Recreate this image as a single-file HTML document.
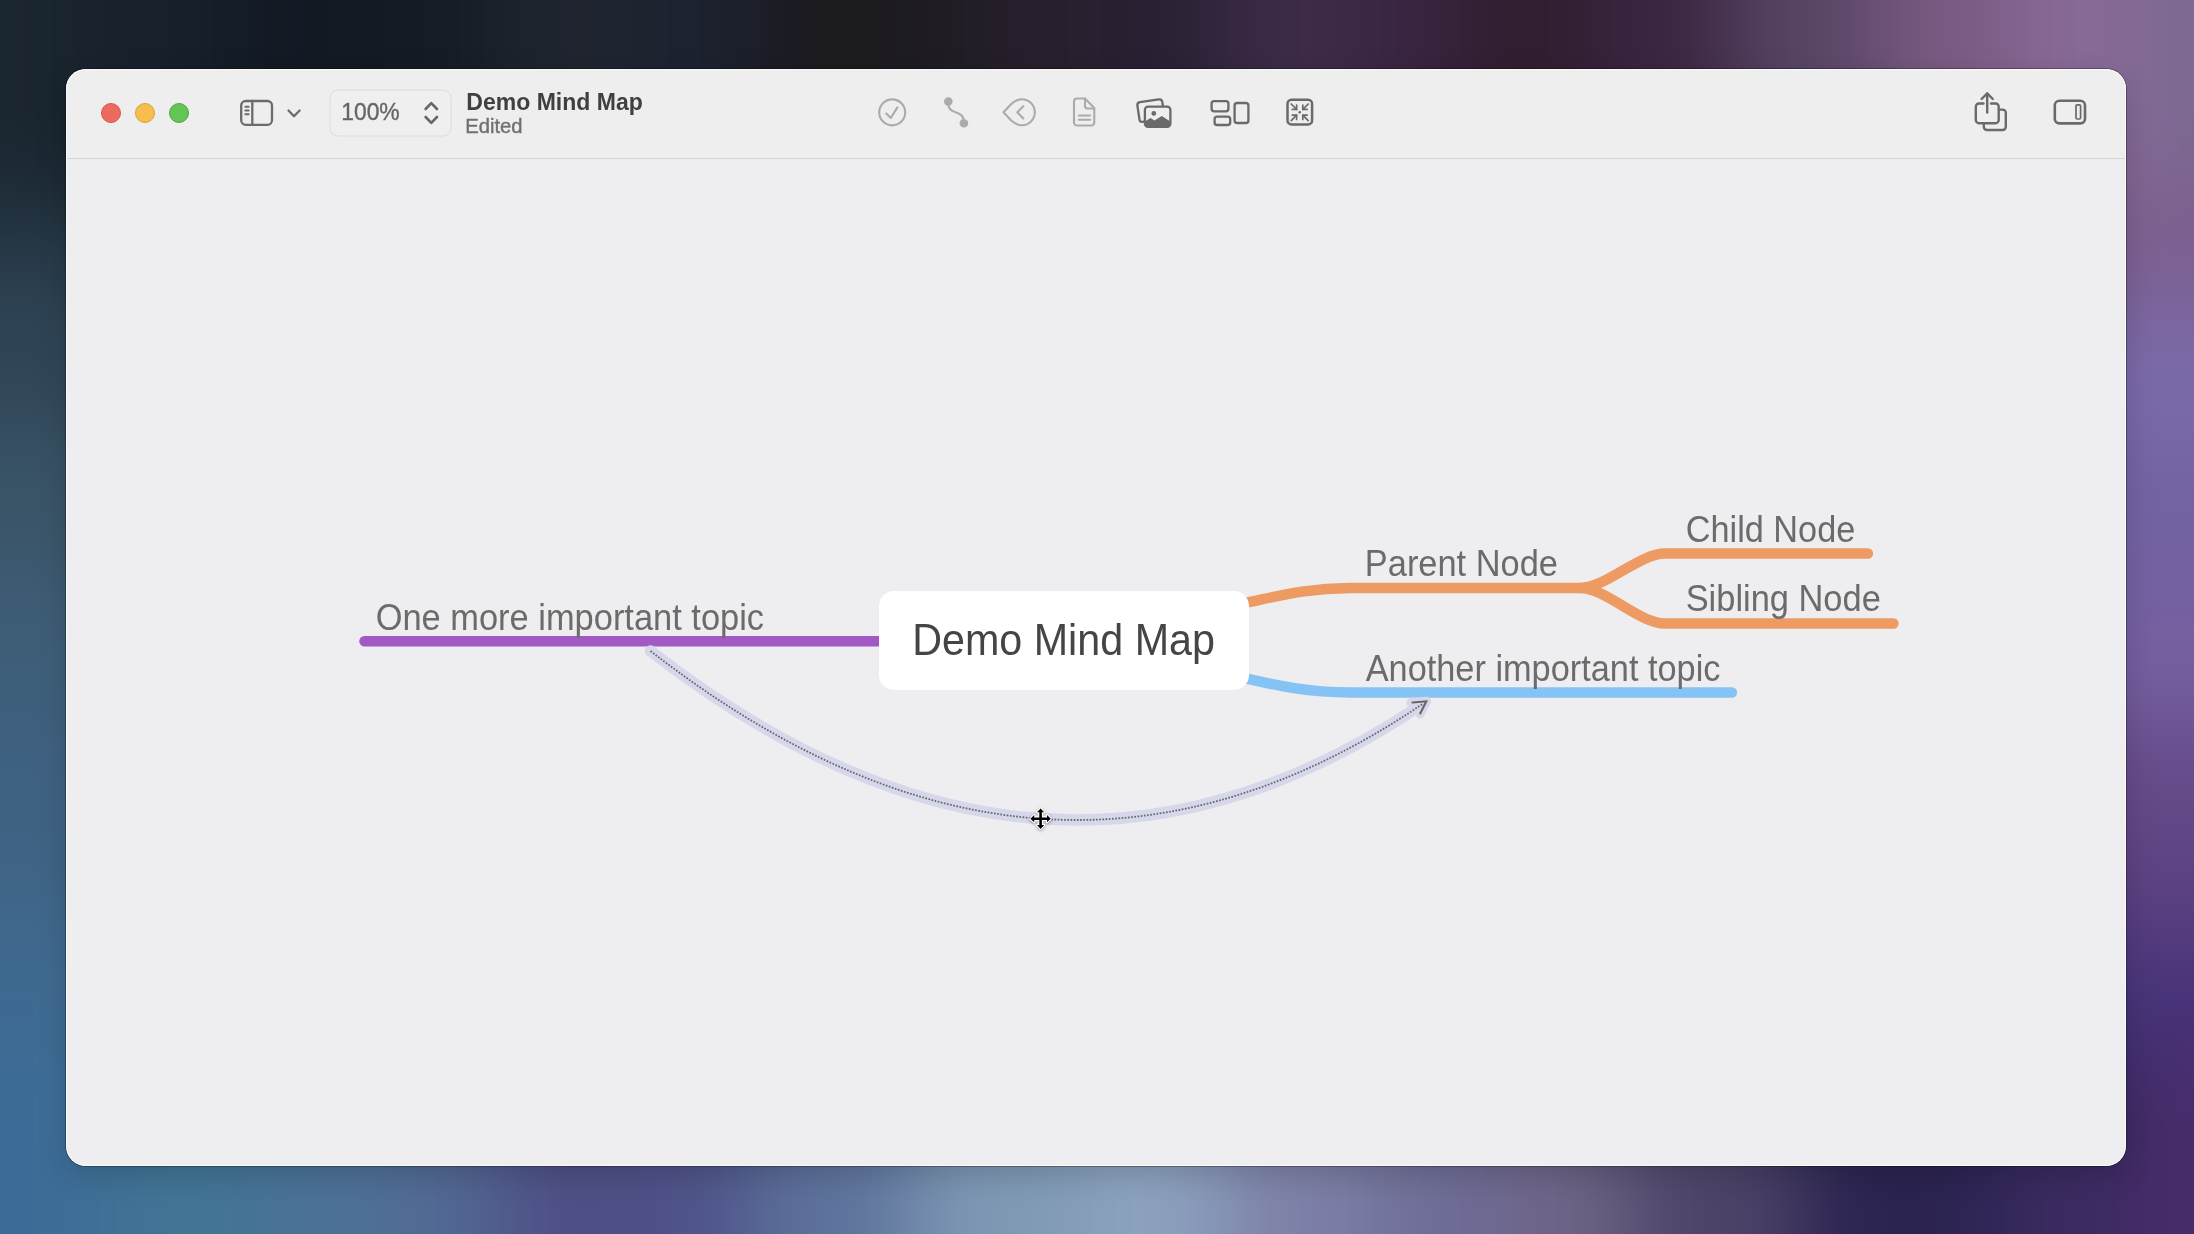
<!DOCTYPE html>
<html><head><meta charset="utf-8">
<style>
html,body{margin:0;padding:0;width:2194px;height:1234px;overflow:hidden;}
body{position:relative;font-family:"Liberation Sans",sans-serif;background:#2c3548;}
.bg{position:absolute;}
#wall div div{position:absolute;}
#win{position:absolute;left:66px;top:69px;width:2060px;height:1097px;border-radius:20px;overflow:hidden;background:#eeeef0;box-shadow:0 0 0 1px rgba(0,0,0,0.3),0 10px 30px rgba(0,0,0,0.16);}
#tb{position:absolute;left:0;top:0;width:2060px;height:89px;background:#eeeeee;border-bottom:1px solid #d5d5d7;}
.dot{position:absolute;width:20px;height:20px;border-radius:50%;box-sizing:border-box;}
.txt{position:absolute;white-space:nowrap;line-height:1;}
svg{position:absolute;left:0;top:0;overflow:visible;}
</style></head>
<body>
<div id="wall" style="position:absolute;left:0;top:0;width:2194px;height:1234px;overflow:hidden;"><div style="position:absolute;left:-400px;top:-400px;width:3000px;height:2034px;filter:blur(45px);"><div style="left:0;top:0;width:3000px;height:2034px;background:#35405a"></div><div style="left:0px;top:0px;width:640px;height:450px;background:#1b2630"></div><div style="left:0px;top:450px;width:640px;height:100px;background:#1c2834"></div><div style="left:0px;top:550px;width:640px;height:125px;background:#243442"></div><div style="left:0px;top:675px;width:640px;height:150px;background:#2f4556"></div><div style="left:0px;top:825px;width:640px;height:150px;background:#3a5468"></div><div style="left:0px;top:975px;width:640px;height:150px;background:#3e5e78"></div><div style="left:0px;top:1125px;width:640px;height:175px;background:#3f6283"></div><div style="left:0px;top:1300px;width:640px;height:217px;background:#3f6a90"></div><div style="left:0px;top:1517px;width:640px;height:1483px;background:#3b6c97"></div><div style="left:2350px;top:0px;width:650px;height:450px;background:#7b6991"></div><div style="left:2350px;top:450px;width:650px;height:100px;background:#7a5a8a"></div><div style="left:2350px;top:550px;width:650px;height:150px;background:#7c5e8e"></div><div style="left:2350px;top:700px;width:650px;height:150px;background:#7a6aa8"></div><div style="left:2350px;top:850px;width:650px;height:125px;background:#7262a2"></div><div style="left:2350px;top:975px;width:650px;height:150px;background:#7560a0"></div><div style="left:2350px;top:1125px;width:650px;height:125px;background:#654a88"></div><div style="left:2350px;top:1250px;width:650px;height:100px;background:#5a4080"></div><div style="left:2350px;top:1350px;width:650px;height:135px;background:#46337a"></div><div style="left:2350px;top:1485px;width:650px;height:117px;background:#3a2a68"></div><div style="left:2350px;top:1602px;width:650px;height:1398px;background:#4a2c6c"></div><div style="left:0px;top:0px;width:475px;height:590px;background:#1a2630"></div><div style="left:475px;top:0px;width:150px;height:590px;background:#17212c"></div><div style="left:625px;top:0px;width:135px;height:590px;background:#121923"></div><div style="left:760px;top:0px;width:130px;height:590px;background:#151b25"></div><div style="left:890px;top:0px;width:140px;height:590px;background:#1f252f"></div><div style="left:1030px;top:0px;width:130px;height:590px;background:#1d2231"></div><div style="left:1160px;top:0px;width:110px;height:590px;background:#1a1a1e"></div><div style="left:1270px;top:0px;width:115px;height:590px;background:#1e1c22"></div><div style="left:1385px;top:0px;width:115px;height:590px;background:#291f2d"></div><div style="left:1500px;top:0px;width:125px;height:590px;background:#282133"></div><div style="left:1625px;top:0px;width:125px;height:590px;background:#3e2c49"></div><div style="left:1750px;top:0px;width:110px;height:590px;background:#392542"></div><div style="left:1860px;top:0px;width:130px;height:590px;background:#301d2e"></div><div style="left:1990px;top:0px;width:140px;height:590px;background:#3a2540"></div><div style="left:2130px;top:0px;width:145px;height:590px;background:#574565"></div><div style="left:2275px;top:0px;width:140px;height:590px;background:#7a5a82"></div><div style="left:2415px;top:0px;width:122px;height:590px;background:#8a6b98"></div><div style="left:2537px;top:0px;width:463px;height:590px;background:#7b6991"></div><div style="left:0px;top:1450px;width:500px;height:584px;background:#3b6c97"></div><div style="left:500px;top:1450px;width:175px;height:584px;background:#427496"></div><div style="left:675px;top:1450px;width:125px;height:584px;background:#4d7196"></div><div style="left:800px;top:1450px;width:105px;height:584px;background:#526894"></div><div style="left:905px;top:1450px;width:115px;height:584px;background:#4e4e84"></div><div style="left:1020px;top:1450px;width:130px;height:584px;background:#4e5288"></div><div style="left:1150px;top:1450px;width:160px;height:584px;background:#5d729c"></div><div style="left:1310px;top:1450px;width:165px;height:584px;background:#7e98b4"></div><div style="left:1475px;top:1450px;width:150px;height:584px;background:#8ca2bf"></div><div style="left:1625px;top:1450px;width:150px;height:584px;background:#7d80a6"></div><div style="left:1775px;top:1450px;width:130px;height:584px;background:#6d6c96"></div><div style="left:1905px;top:1450px;width:125px;height:584px;background:#6e6486"></div><div style="left:2030px;top:1450px;width:170px;height:584px;background:#4c4468"></div><div style="left:2200px;top:1450px;width:200px;height:584px;background:#2b2350"></div><div style="left:2400px;top:1450px;width:147px;height:584px;background:#3b2b62"></div><div style="left:2547px;top:1450px;width:453px;height:584px;background:#4a2c6c"></div></div></div>
<div id="win">
 <div id="tb"></div>
 <div style="position:absolute;left:0;top:0;right:0;bottom:0;border-radius:20px;box-shadow:inset 0 0 0 1px rgba(255,255,255,0.75);"></div>
</div>
<!-- toolbar items in page coordinates -->
<div class="dot" style="left:100.5px;top:103px;background:#ed6a5f;border:1px solid #d5574c;"></div>
<div class="dot" style="left:134.7px;top:103px;background:#f5be4f;border:1px solid #d9a23c;"></div>
<div class="dot" style="left:169px;top:103px;background:#62c554;border:1px solid #4ea843;"></div>

<svg width="2194" height="1234" viewBox="0 0 2194 1234">
 <g fill="none" stroke="#6b6b6b" stroke-width="2.3" stroke-linecap="round" stroke-linejoin="round">
  <!-- sidebar icon -->
  <rect x="241.2" y="101" width="30.8" height="23.8" rx="4.5"/>
  <line x1="252.3" y1="101" x2="252.3" y2="124.8"/>
  <line x1="245.4" y1="106.8" x2="248.6" y2="106.8" stroke-width="2"/>
  <line x1="245.4" y1="110.5" x2="248.6" y2="110.5" stroke-width="2"/>
  <line x1="245.4" y1="114.3" x2="248.6" y2="114.3" stroke-width="2"/>
  <!-- chevron -->
  <polyline points="288.5,110.5 294,116.2 299.6,110.5"/>
  <!-- stepper -->
  <polyline points="425.6,109 431.3,103.2 437,109" stroke="#666"/>
  <polyline points="425.6,117 431.3,122.8 437,117" stroke="#666"/>
 </g>
 <rect x="330" y="90" width="121" height="46" rx="8" fill="#efefef" stroke="#dcdcdc" stroke-width="1"/>
 <polyline points="425.6,109 431.3,103.2 437,109" fill="none" stroke="#666" stroke-width="2.6" stroke-linecap="round" stroke-linejoin="round"/>
 <polyline points="425.6,117 431.3,122.8 437,117" fill="none" stroke="#666" stroke-width="2.6" stroke-linecap="round" stroke-linejoin="round"/>
</svg>



<svg width="2194" height="1234" viewBox="0 0 2194 1234">
 <!-- disabled icons -->
 <g fill="none" stroke="#ababab" stroke-width="2.1" stroke-linecap="round" stroke-linejoin="round">
  <circle cx="892.2" cy="112.4" r="13"/>
  <polyline points="886.3,113.6 890.8,118 897.4,107.4"/>
  <path d="M948.3,101.5 C948.3,109 950.5,110.5 955,112 C960,113.8 964,115.5 963.9,123"/>
  <path d="M1021.8,99.3 A13,13 0 1 1 1021.8,125.3 C1017,125.3 1014,123 1011,120.3 L1003.5,112.3 L1011,104.3 C1014,101.6 1017,99.3 1021.8,99.3 Z"/>
  <polyline points="1023.3,106.2 1017.3,112.3 1023.3,118.4"/>
  <path d="M1077,98.5 L1085,98.5 L1094.3,108 L1094.3,122.5 A3,3 0 0 1 1091.3,125.5 L1077,125.5 A3,3 0 0 1 1074,122.5 L1074,101.5 A3,3 0 0 1 1077,98.5 Z"/>
  <path d="M1085,98.5 L1085,106 A2.5,2.5 0 0 0 1087.5,108.5 L1094.3,108.5"/>
  <line x1="1078.8" y1="115.5" x2="1090.2" y2="115.5"/>
  <line x1="1078.8" y1="119.8" x2="1090.2" y2="119.8"/>
 </g>
 <circle cx="948.3" cy="101.5" r="4.3" fill="#ababab"/>
 <circle cx="963.9" cy="123.2" r="4.3" fill="#ababab"/>
 <!-- enabled icons -->
 <g fill="none" stroke="#6a6a6a" stroke-width="2.3" stroke-linecap="round" stroke-linejoin="round">
  <path d="M1144,121.6 L1142.3,121.8 A2.6,2.6 0 0 1 1139.5,119.6 L1137.4,105.6 A3,3 0 0 1 1139.9,102.2 L1158.9,99.4 A3,3 0 0 1 1162.3,101.9 L1162.9,106"/>
  <rect x="1144.9" y="106.6" width="25.5" height="20.2" rx="3.2"/>
  <rect x="1211.6" y="101.2" width="16.8" height="10.2" rx="2.6"/>
  <rect x="1214.6" y="116.6" width="15.6" height="8.4" rx="2.6"/>
  <rect x="1234.6" y="103" width="13.8" height="20" rx="2.6"/>
  <rect x="1287.5" y="99.8" width="24.6" height="24.6" rx="4" stroke-width="2.5"/>
 </g>
 <circle cx="1153.8" cy="113.4" r="2.4" fill="#6a6a6a"/>
 <path d="M1145,124 L1145,121.5 L1150.5,118 L1154.5,120.5 L1161.8,116 L1170.3,121.5 L1170.3,124 A2.8,2.8 0 0 1 1167.5,126.8 L1147.8,126.8 A2.8,2.8 0 0 1 1145,124 Z" fill="#6a6a6a"/>
 <g fill="none" stroke="#6a6a6a" stroke-width="1.7" stroke-linecap="round" stroke-linejoin="round">
  <line x1="1291.2" y1="104" x2="1296.6" y2="109.4"/><polyline points="1292.3,109.4 1296.6,109.4 1296.6,105.1"/>
  <line x1="1308.2" y1="104" x2="1302.8" y2="109.4"/><polyline points="1307.1,109.4 1302.8,109.4 1302.8,105.1"/>
  <line x1="1291.2" y1="120.6" x2="1296.6" y2="115.2"/><polyline points="1292.3,115.2 1296.6,115.2 1296.6,119.5"/>
  <line x1="1308.2" y1="120.6" x2="1302.8" y2="115.2"/><polyline points="1307.1,115.2 1302.8,115.2 1302.8,119.5"/>
 </g>
 <circle cx="1299.7" cy="112.3" r="1.3" fill="#6a6a6a"/>
 <!-- share icon -->
 <g fill="none" stroke="#6a6a6a" stroke-width="2.4" stroke-linecap="round" stroke-linejoin="round">
  <path d="M1983.5,103.5 L1979,103.5 A3.2,3.2 0 0 0 1975.8,106.7 L1975.8,120 A3.2,3.2 0 0 0 1979,123.2 L1995.5,123.2 A3.2,3.2 0 0 0 1998.7,120 L1998.7,106.7 A3.2,3.2 0 0 0 1995.5,103.5 L1991,103.5"/>
  <path d="M1983.8,123.5 L1983.8,126.8 A3.2,3.2 0 0 0 1987,130 L2002.6,130 A3.2,3.2 0 0 0 2005.8,126.8 L2005.8,112.8 A3.2,3.2 0 0 0 2002.6,109.6 L1999,109.6"/>
  <line x1="1987.2" y1="93.6" x2="1987.2" y2="112.6"/>
  <polyline points="1981.6,99 1987.2,93.4 1992.8,99"/>
  <rect x="2054.8" y="100.8" width="30.2" height="22.6" rx="4.6" stroke-width="2.6"/>
 </g>
 <rect x="2076" y="104.8" width="4.6" height="14.2" rx="1.2" fill="none" stroke="#6a6a6a" stroke-width="1.7"/>
</svg>


<svg width="2194" height="1234" viewBox="0 0 2194 1234">
 <g fill="none" stroke-width="10.4" stroke-linecap="round">
  <line x1="364.5" y1="641.2" x2="885" y2="641.2" stroke="#a259c4" stroke-width="10.5"/>
  <path d="M1240,604 C1275,597 1305,588 1350,588 L1580,588 C1606,588 1639,553.5 1665,553.5 L1868,553.5" stroke="#ee9b63"/>
  <path d="M1580,588 C1606,588 1639,623.5 1665,623.5 L1893.5,623.5" stroke="#ee9b63"/>
  <path d="M1240,677 C1275,685 1305,692.5 1350,692.5 L1732,692.5" stroke="#85c3f5"/>
 </g>
 <rect x="879" y="591" width="370" height="99" rx="15" fill="#ffffff"/>
 <!-- relationship connector -->
 <path d="M650.5,651 C887.9,835.2 1144.5,892 1423,703.7" fill="none" stroke="#d6d7ea" stroke-width="11.5" stroke-linecap="round"/>
 <path d="M1411,702.5 L1426.5,701.2 L1420,714" fill="none" stroke="#d6d7ea" stroke-width="9" stroke-linecap="round" stroke-linejoin="round"/>
 <path d="M650.5,651 C887.9,835.2 1144.5,892 1423,703.7" fill="none" stroke="#68686f" stroke-width="1.8" stroke-dasharray="1.7 1.5"/>
 <path d="M1412.5,702.6 L1426.3,701.3 L1420.2,713.5" fill="none" stroke="#666" stroke-width="2" stroke-linecap="round" stroke-linejoin="miter"/>
</svg>
<!-- move cursor -->
<svg width="2194" height="1234" viewBox="0 0 2194 1234">
 <rect x="1034.6" y="812.7" width="12" height="12" rx="3" transform="rotate(45 1040.6 818.7)" fill="#fff"/>
 <path d="M1040.60,808.50 L1044.20,812.30 L1041.90,812.30 L1041.90,817.40 L1047.00,817.40 L1047.00,815.10 L1050.80,818.70 L1047.00,822.30 L1047.00,820.00 L1041.90,820.00 L1041.90,825.10 L1044.20,825.10 L1040.60,828.90 L1037.00,825.10 L1039.30,825.10 L1039.30,820.00 L1034.20,820.00 L1034.20,822.30 L1030.40,818.70 L1034.20,815.10 L1034.20,817.40 L1039.30,817.40 L1039.30,812.30 L1037.00,812.30 Z" fill="#000" stroke="#fff" stroke-width="2.2" stroke-linejoin="round" paint-order="stroke" style="filter:drop-shadow(0 1px 1.5px rgba(0,0,0,0.35))"/>
</svg>

<div class="txt" style="left:375.67px;top:600.63px;font-size:34.44px;color:#6b6b6b;transform:scaleY(1.095);transform-origin:0 29.37px;">One more important topic</div>
<div class="txt" style="left:912.28px;top:621.08px;font-size:41.26px;color:#454545;transform:scaleY(1.065);transform-origin:0 34.22px;">Demo Mind Map</div>
<div class="txt" style="left:1364.87px;top:546.97px;font-size:34.38px;color:#6b6b6b;transform:scaleY(1.095);transform-origin:0 29.33px;">Parent Node</div>
<div class="txt" style="left:1685.78px;top:513.47px;font-size:34.27px;color:#6b6b6b;transform:scaleY(1.095);transform-origin:0 29.23px;">Child Node</div>
<div class="txt" style="left:1685.68px;top:581.65px;font-size:34.41px;color:#6b6b6b;transform:scaleY(1.095);transform-origin:0 29.35px;">Sibling Node</div>
<div class="txt" style="left:1365.7px;top:651.53px;font-size:34.32px;color:#6b6b6b;transform:scaleY(1.095);transform-origin:0 29.27px;">Another important topic</div>
<div class="txt" style="left:341.22px;top:101.2px;font-size:22.86px;color:#666666;-webkit-text-stroke:0.35px #666666;transform:scaleY(1.04);transform-origin:0 18.7px;">100%</div>
<div class="txt" style="left:466.35px;top:90.81px;font-size:23.03px;color:#404040;font-weight:bold;transform:scaleY(1.02);transform-origin:0 18.84px;">Demo Mind Map</div>
<div class="txt" style="left:465.27px;top:116.46px;font-size:20.23px;color:#707070;-webkit-text-stroke:0.4px #707070;transform:scaleY(1.0);transform-origin:0 17.04px;">Edited</div>
</body></html>
